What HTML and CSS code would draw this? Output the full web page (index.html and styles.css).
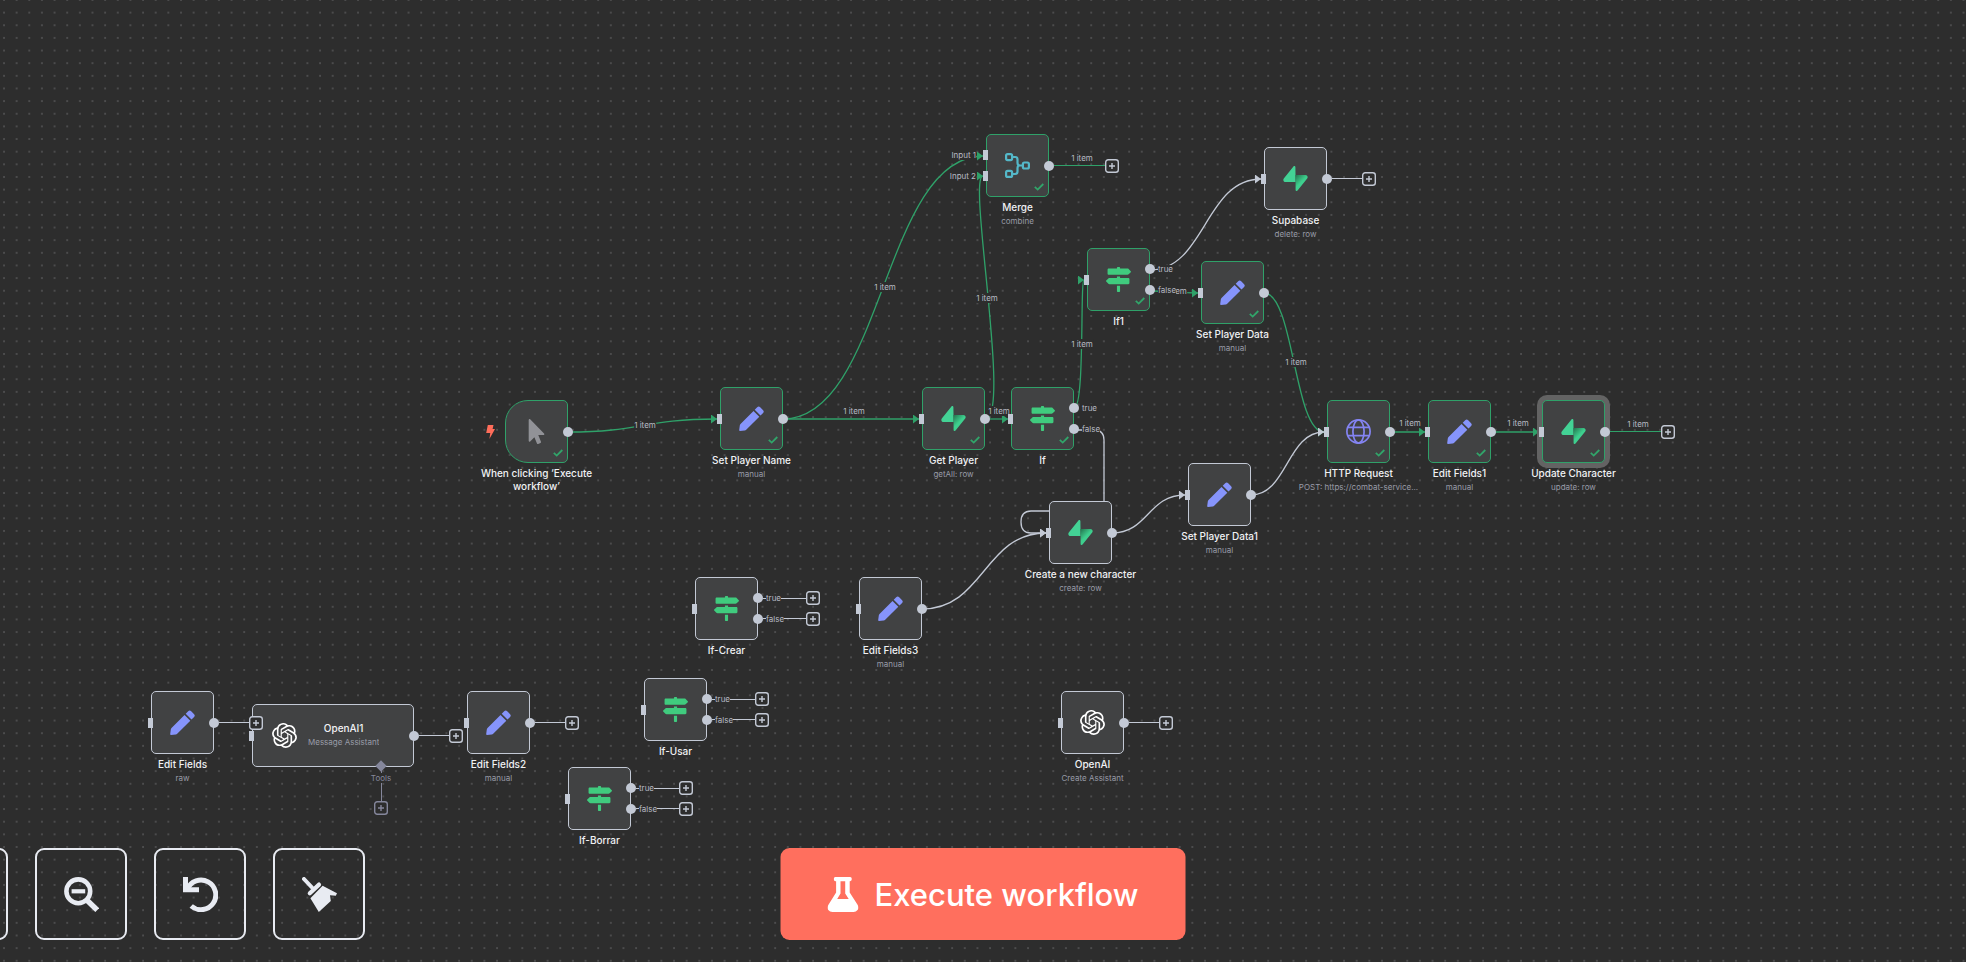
FILE: index.html
```html
<!DOCTYPE html>
<html lang="en">
<head>
<meta charset="utf-8">
<meta name="viewport" content="width=device-width, initial-scale=1">
<title>Workflow editor</title>
<link rel="stylesheet" href="styles.css">
</head>
<body>
<svg class="sprite" aria-hidden="true">
  <defs>
    <linearGradient id="bolt-shade" x1="12" y1="9" x2="18" y2="15" gradientUnits="userSpaceOnUse">
      <stop offset="0" stop-color="#24754f"/><stop offset="1" stop-color="#3ecf8e"/>
    </linearGradient>
    <symbol id="i-pencil" viewBox="0 0 25 25">
      <path fill="#8694fb" d="M.2 24 .8 19.400q.1-.8.700-1.400L14.500 5l5.800 5.800L7.200 23.800q-.6.600-1.400.7L1 25Q.1 25 .2 24zM15.700 3.800 18.200 1.300q1.500-1.500 3 0l2.900 2.900q1.300 1.400 0 2.800l-2.600 2.600z"/>
    </symbol>
    <symbol id="i-supabase" viewBox="0 0 24 24">
      <path fill="#43d295" d="M11.900 1.036c-.015-.986-1.260-1.410-1.874-.637L.764 12.050C-.330 13.427.650 15.455 2.409 15.455H12.100z"/>
      <path fill="url(#bolt-shade)" d="M12 8.545h9.591c1.758 0 2.738 2.028 1.645 3.403l-9.262 11.653c-.614.772-1.859.349-1.873-.636z"/>
    </symbol>
    <symbol id="i-signs" viewBox="0 0 512 512">
      <path fill="#40cb7e" d="M507.310 84.690L464 41.370c-6-6-14.140-9.370-22.630-9.370H288V16c0-8.840-7.160-16-16-16h-32c-8.840 0-16 7.160-16 16v16H56c-13.250 0-24 10.750-24 24v80c0 13.250 10.750 24 24 24h385.370c8.490 0 16.620-3.370 22.630-9.370l43.310-43.310c6.250-6.260 6.250-16.380 0-22.630zM224 496c0 8.840 7.160 16 16 16h32c8.840 0 16-7.160 16-16V384h-64v112zm232-272H288v-32h-64v32H70.630c-8.490 0-16.620 3.370-22.630 9.370L4.690 276.690c-6.250 6.250-6.250 16.380 0 22.630L48 342.630c6 6 14.140 9.370 22.630 9.370H456c13.250 0 24-10.750 24-24v-80c0-13.250-10.750-24-24-24z"/>
    </symbol>
    <symbol id="i-globe" viewBox="0 0 25 25">
      <g fill="none" stroke="#8484f2" stroke-width="1.700"><circle cx="12.500" cy="12.500" r="11.600"/><ellipse cx="12.500" cy="12.500" rx="5.600" ry="11.600"/><path d="M1.800 8.400h21.400M1.800 16.600h21.400"/></g>
    </symbol>
    <symbol id="i-merge" viewBox="0 0 25 25">
      <g fill="none" stroke="#54b8c9" stroke-width="2.200"><rect x="1.100" y="1.100" width="6" height="6" rx="1.500"/><rect x="1.100" y="17.900" width="6" height="6" rx="1.500"/><rect x="17.900" y="9.500" width="6" height="6" rx="1.500"/><path d="M7 4h3q2.500 0 2.500 2.500v3.500q0 2.500 2.500 2.500h3M7 21h3q2.500 0 2.500-2.500V15q0-2.500 2.500-2.500"/></g>
    </symbol>
    <symbol id="i-pointer" viewBox="0 0 320 512">
      <path fill="#919297" d="M302.189 329.126H196.105l55.831 135.993c3.889 9.428-.555 19.999-9.444 23.999l-49.165 21.427c-9.165 4-19.443-.571-23.332-9.714l-53.053-129.136-86.664 89.138C18.729 472.710 0 463.554 0 447.977V18.299C0 1.899 19.921-6.096 30.277 5.443l284.412 292.542c11.472 11.179 3.007 31.141-12.500 31.141z"/>
    </symbol>
    <symbol id="i-openai" viewBox="0 0 24 24">
      <path fill="#fff" d="M22.2819 9.8211a5.9847 5.9847 0 0 0-.5157-4.9108 6.0462 6.0462 0 0 0-6.5098-2.9A6.0651 6.0651 0 0 0 4.9807 4.1818a5.9847 5.9847 0 0 0-3.9977 2.9 6.0462 6.0462 0 0 0 .7427 7.0966 5.98 5.98 0 0 0 .511 4.9107 6.051 6.051 0 0 0 6.5146 2.9001A5.9847 5.9847 0 0 0 13.2599 24a6.0557 6.0557 0 0 0 5.7718-4.2058 5.9894 5.9894 0 0 0 3.9977-2.9001 6.0557 6.0557 0 0 0-.7475-7.0729zm-9.022 12.6081a4.4755 4.4755 0 0 1-2.8764-1.0408l.1419-.0804 4.7783-2.7582a.7948.7948 0 0 0 .3927-.6813v-6.7369l2.02 1.1686a.071.071 0 0 1 .038.052v5.5826a4.504 4.504 0 0 1-4.4945 4.4944zm-9.6607-4.1254a4.4708 4.4708 0 0 1-.5346-3.0137l.142.0852 4.783 2.7582a.7712.7712 0 0 0 .7806 0l5.8428-3.3685v2.3324a.0804.0804 0 0 1-.0332.0615L9.74 19.9502a4.4992 4.4992 0 0 1-6.1408-1.6464zM2.3408 7.8956a4.485 4.485 0 0 1 2.3655-1.9728V11.6a.7664.7664 0 0 0 .3879.6765l5.8144 3.3543-2.0201 1.1685a.0757.0757 0 0 1-.071 0l-4.8303-2.7865A4.504 4.504 0 0 1 2.3408 7.872zm16.5963 3.8558L13.1038 8.364 15.1192 7.2a.0757.0757 0 0 1 .071 0l4.8303 2.7913a4.4944 4.4944 0 0 1-.6765 8.1042v-5.6772a.79.79 0 0 0-.407-.667zm2.0107-3.0231l-.142-.0852-4.7735-2.7818a.7759.7759 0 0 0-.7854 0L9.409 9.2297V6.8974a.0662.0662 0 0 1 .0284-.0615l4.8303-2.7866a4.4992 4.4992 0 0 1 6.6802 4.66zM8.3065 12.863l-2.02-1.1638a.0804.0804 0 0 1-.038-.0567V6.0742a4.4992 4.4992 0 0 1 7.3757-3.4537l-.142.0805L8.704 5.459a.7948.7948 0 0 0-.3927.6813zm1.0976-2.3654l2.602-1.4998 2.6069 1.4998v2.9994l-2.5974 1.4997-2.6067-1.4997Z"/>
    </symbol>
    <symbol id="i-check" viewBox="0 0 10 8"><path fill="none" stroke="#31a56a" stroke-width="1.800" d="M.8 3.900 3.700 6.600 9.300 1"/></symbol>
    <symbol id="i-plus" viewBox="0 0 14 14"><g fill="none" stroke="currentColor" stroke-width="1.400"><rect x=".7" y=".7" width="12.600" height="12.600" rx="2.500"/><path d="M7 4v6M4 7h6"/></g></symbol>
    <symbol id="i-bolt" viewBox="0 0 9 14"><path fill="#ff6d5a" d="M1.800 0h5.700L6.600 4H9L3.400 14l.9-6H.2z"/></symbol>
    <symbol id="i-zoom-out" viewBox="0 0 35 35">
      <g fill="none" stroke="currentColor"><circle cx="14.300" cy="14.300" r="11.900" stroke-width="4.600"/><path stroke-width="4.200" d="M7.600 14.300h13.600"/><path stroke-width="5.400" d="m23 23.300 10.200 9.800"/></g>
    </symbol>
    <symbol id="i-zoom-in" viewBox="0 0 35 35">
      <g fill="none" stroke="currentColor"><circle cx="14.300" cy="14.300" r="11.900" stroke-width="4.600"/><path stroke-width="4.200" d="M7.600 14.300h13.600M14.300 7.600v13.600"/><path stroke-width="5.400" d="m23 23.300 10.200 9.800"/></g>
    </symbol>
    <symbol id="i-undo" viewBox="0 0 35 35">
      <g fill="none" stroke="currentColor" stroke-width="5"><path d="M2.500 0v12.700H16"/><path d="M4.300 12.300A14.800 14.800 0 1 1 8.200 29"/></g>
    </symbol>
    <symbol id="i-broom" viewBox="0 0 35 35">
      <path fill="none" stroke="currentColor" stroke-width="4" stroke-linecap="round" d="m2 2 8 8.500"/>
      <path fill="none" stroke="currentColor" stroke-width="4.200" stroke-linecap="round" d="M7.800 16.200 17 7.600"/>
      <path fill="currentColor" d="M20.600 8.700 35 16.300l-1.200 2.500-5.800-.6.800 5.800L16.800 35 8.400 21.200z"/>
    </symbol>
    <symbol id="i-flask" viewBox="0 0 31 35">
      <path fill="currentColor" fill-rule="evenodd" d="M8 0h14.600q1.700 0 1.700 2.100t-1.700 2.200h-.4v11.200l8 12.400q1.600 3.200-.2 5.200-1.400 1.900-4 1.900H5q-2.800 0-4.200-1.900-1.600-2.200 0-5.200l7.800-12.400V4.300H8q-1.700 0-1.700-2.200T8 0zm5 4.300v12.200L9.700 22h11.500l-3.500-5.500V4.300z"/>
    </symbol>
  </defs>
</svg>

<main class="canvas">
  <svg class="edges" width="100%" height="100%" aria-hidden="true">
    <defs>
      <pattern id="grid" x="3" y="-1" width="12.642" height="12.642" patternUnits="userSpaceOnUse">
        <circle cx="1" cy="1" r=".7" fill="#7c7d7e"/>
      </pattern>
      <marker id="arrow-ok" viewBox="0 0 6 9" refX="6" refY="4.500" markerWidth="6" markerHeight="9" markerUnits="userSpaceOnUse" orient="0"><path fill="#2fa169" d="M0 0l6 4.500L0 9z"/></marker>
      <marker id="arrow" viewBox="0 0 6 9" refX="6" refY="4.500" markerWidth="6" markerHeight="9" markerUnits="userSpaceOnUse" orient="0"><path fill="#c3c9d5" d="M0 0l6 4.500L0 9z"/></marker>
    </defs>
    <rect width="100%" height="100%" fill="url(#grid)"/>
    <g class="edge edge--ok">
      <path d="M568 432C642 432 642 419 717 419"/>
      <path d="M783 419H919"/>
      <path d="M783 419C883 419 883 156 983 156"/>
      <path d="M985 419C1012 419 967 176 983 176"/>
      <path d="M985 419H1008"/>
      <path d="M1074 408C1085 408 1080 280 1084 280"/>
      <path d="M1150 291C1173 291 1173 293 1198 293"/>
      <path d="M1264 293C1294 293 1294 432 1324 432"/>
      <path d="M1390 432H1425"/>
      <path d="M1491 432H1539"/>
    </g>
    <g class="edge">
      <path d="M1074 430H1094Q1104 430 1104 440V501Q1104 511 1094 511H1031Q1021 511 1021 522T1031 533H1046"/>
      <path d="M922 609C984 609 984 533 1046 533"/>
      <path d="M1112 533C1148 533 1148 495 1185 495"/>
      <path d="M1251 495C1287 495 1287 432 1324 432"/>
      <path d="M1150 270C1205 270 1205 179 1261 179"/>
    </g>
  </svg>

  <span class="edge-label at-trigger">1 item</span>
  <span class="edge-label at-name-merge">1 item</span>
  <span class="edge-label at-name-get">1 item</span>
  <span class="edge-label at-get-merge">1 item</span>
  <span class="edge-label at-get-if">1 item</span>
  <span class="edge-label at-if-if1">1 item</span>
  <span class="edge-label at-if1-data">1 item</span>
  <span class="edge-label at-data-http">1 item</span>
  <span class="edge-label at-http-edit">1 item</span>
  <span class="edge-label at-edit-update">1 item</span>

  <article class="node node--ok node--trigger n-trigger">
    <svg class="bolt"><use href="#i-bolt"/></svg>
    <svg class="icon"><use href="#i-pointer"/></svg>
    <svg class="check"><use href="#i-check"/></svg>
    <div class="out"><i class="dot"></i></div>
    <div class="caption"><h2 class="name">When clicking ‘Execute workflow’</h2></div>
  </article>

  <article class="node node--ok n-set-name">
    <i class="in"></i>
    <svg class="icon"><use href="#i-pencil"/></svg>
    <svg class="check"><use href="#i-check"/></svg>
    <div class="out"><i class="dot"></i></div>
    <div class="caption"><h2 class="name">Set Player Name</h2><p class="sub">manual</p></div>
  </article>

  <article class="node node--ok n-get-player">
    <i class="in"></i>
    <svg class="icon"><use href="#i-supabase"/></svg>
    <svg class="check"><use href="#i-check"/></svg>
    <div class="out"><i class="dot"></i></div>
    <div class="caption"><h2 class="name">Get Player</h2><p class="sub">getAll: row</p></div>
  </article>

  <article class="node node--ok n-if">
    <i class="in"></i>
    <svg class="icon"><use href="#i-signs"/></svg>
    <svg class="check"><use href="#i-check"/></svg>
    <div class="out out--first"><i class="dot"></i><span class="port">true</span></div>
    <div class="out out--second"><i class="dot"></i><span class="port">false</span></div>
    <div class="caption"><h2 class="name">If</h2></div>
  </article>

  <article class="node node--ok n-merge">
    <i class="in in--first"></i><span class="port-in port-in--first">Input 1</span>
    <i class="in in--second"></i><span class="port-in port-in--second">Input 2</span>
    <svg class="icon"><use href="#i-merge"/></svg>
    <svg class="check"><use href="#i-check"/></svg>
    <div class="out out--ok"><i class="dot"></i><i class="link link--long"></i><button class="plus" aria-label="Add node after Merge"><svg><use href="#i-plus"/></svg></button><span class="link-label">1 item</span></div>
    <div class="caption"><h2 class="name">Merge</h2><p class="sub">combine</p></div>
  </article>

  <article class="node node--ok n-if1">
    <i class="in"></i>
    <svg class="icon"><use href="#i-signs"/></svg>
    <svg class="check"><use href="#i-check"/></svg>
    <div class="out out--first"><i class="dot"></i><span class="port">true</span></div>
    <div class="out out--second"><i class="dot"></i><span class="port">false</span></div>
    <div class="caption"><h2 class="name">If1</h2></div>
  </article>

  <article class="node n-supabase">
    <i class="in"></i>
    <svg class="icon"><use href="#i-supabase"/></svg>
    <div class="out"><i class="dot"></i><i class="link"></i><button class="plus" aria-label="Add node after Supabase"><svg><use href="#i-plus"/></svg></button></div>
    <div class="caption"><h2 class="name">Supabase</h2><p class="sub">delete: row</p></div>
  </article>

  <article class="node node--ok n-set-data">
    <i class="in"></i>
    <svg class="icon"><use href="#i-pencil"/></svg>
    <svg class="check"><use href="#i-check"/></svg>
    <div class="out"><i class="dot"></i></div>
    <div class="caption"><h2 class="name">Set Player Data</h2><p class="sub">manual</p></div>
  </article>

  <article class="node node--ok n-http">
    <i class="in"></i>
    <svg class="icon"><use href="#i-globe"/></svg>
    <svg class="check"><use href="#i-check"/></svg>
    <div class="out"><i class="dot"></i></div>
    <div class="caption"><h2 class="name">HTTP Request</h2><p class="sub">POST: https://combat-service...</p></div>
  </article>

  <article class="node node--ok n-edit1">
    <i class="in"></i>
    <svg class="icon"><use href="#i-pencil"/></svg>
    <svg class="check"><use href="#i-check"/></svg>
    <div class="out"><i class="dot"></i></div>
    <div class="caption"><h2 class="name">Edit Fields1</h2><p class="sub">manual</p></div>
  </article>

  <article class="node node--ok node--selected n-update">
    <i class="in"></i>
    <svg class="icon"><use href="#i-supabase"/></svg>
    <svg class="check"><use href="#i-check"/></svg>
    <div class="out out--ok"><i class="dot"></i><i class="link link--long"></i><button class="plus" aria-label="Add node after Update Character"><svg><use href="#i-plus"/></svg></button><span class="link-label">1 item</span></div>
    <div class="caption"><h2 class="name">Update Character</h2><p class="sub">update: row</p></div>
  </article>

  <article class="node n-create">
    <i class="in"></i>
    <svg class="icon"><use href="#i-supabase"/></svg>
    <div class="out"><i class="dot"></i></div>
    <div class="caption"><h2 class="name">Create a new character</h2><p class="sub">create: row</p></div>
  </article>

  <article class="node n-set-data1">
    <i class="in"></i>
    <svg class="icon"><use href="#i-pencil"/></svg>
    <div class="out"><i class="dot"></i></div>
    <div class="caption"><h2 class="name">Set Player Data1</h2><p class="sub">manual</p></div>
  </article>

  <article class="node n-edit3">
    <i class="in"></i>
    <svg class="icon"><use href="#i-pencil"/></svg>
    <div class="out"><i class="dot"></i></div>
    <div class="caption"><h2 class="name">Edit Fields3</h2><p class="sub">manual</p></div>
  </article>

  <article class="node n-if-crear">
    <i class="in"></i>
    <svg class="icon"><use href="#i-signs"/></svg>
    <div class="out out--first"><i class="dot"></i><i class="link link--port"></i><button class="plus" aria-label="Add node after If-Crear true"><svg><use href="#i-plus"/></svg></button><span class="port">true</span></div>
    <div class="out out--second"><i class="dot"></i><i class="link link--port"></i><button class="plus" aria-label="Add node after If-Crear false"><svg><use href="#i-plus"/></svg></button><span class="port">false</span></div>
    <div class="caption"><h2 class="name">If-Crear</h2></div>
  </article>

  <article class="node n-if-usar">
    <i class="in"></i>
    <svg class="icon"><use href="#i-signs"/></svg>
    <div class="out out--first"><i class="dot"></i><i class="link link--port"></i><button class="plus" aria-label="Add node after If-Usar true"><svg><use href="#i-plus"/></svg></button><span class="port">true</span></div>
    <div class="out out--second"><i class="dot"></i><i class="link link--port"></i><button class="plus" aria-label="Add node after If-Usar false"><svg><use href="#i-plus"/></svg></button><span class="port">false</span></div>
    <div class="caption"><h2 class="name">If-Usar</h2></div>
  </article>

  <article class="node n-if-borrar">
    <i class="in"></i>
    <svg class="icon"><use href="#i-signs"/></svg>
    <div class="out out--first"><i class="dot"></i><i class="link link--port"></i><button class="plus" aria-label="Add node after If-Borrar true"><svg><use href="#i-plus"/></svg></button><span class="port">true</span></div>
    <div class="out out--second"><i class="dot"></i><i class="link link--port"></i><button class="plus" aria-label="Add node after If-Borrar false"><svg><use href="#i-plus"/></svg></button><span class="port">false</span></div>
    <div class="caption"><h2 class="name">If-Borrar</h2></div>
  </article>

  <article class="node n-openai">
    <i class="in"></i>
    <svg class="icon"><use href="#i-openai"/></svg>
    <div class="out"><i class="dot"></i><i class="link"></i><button class="plus" aria-label="Add node after OpenAI"><svg><use href="#i-plus"/></svg></button></div>
    <div class="caption"><h2 class="name">OpenAI</h2><p class="sub">Create Assistant</p></div>
  </article>

  <article class="node node--wide n-openai1">
    <i class="in"></i>
    <svg class="icon"><use href="#i-openai"/></svg>
    <div class="inline-caption"><h2 class="name">OpenAI1</h2><p class="sub">Message Assistant</p></div>
    <div class="out"><i class="dot"></i><i class="link"></i><button class="plus" aria-label="Add node after OpenAI1"><svg><use href="#i-plus"/></svg></button></div>
    <div class="tools"><i class="diamond"></i><i class="stem"></i><span class="tools-label">Tools</span><button class="plus" aria-label="Add tool"><svg><use href="#i-plus"/></svg></button></div>
  </article>

  <article class="node n-edit">
    <i class="in"></i>
    <svg class="icon"><use href="#i-pencil"/></svg>
    <div class="out"><i class="dot"></i><i class="link"></i><button class="plus" aria-label="Add node after Edit Fields"><svg><use href="#i-plus"/></svg></button></div>
    <div class="caption"><h2 class="name">Edit Fields</h2><p class="sub">raw</p></div>
  </article>

  <article class="node n-edit2">
    <i class="in"></i>
    <svg class="icon"><use href="#i-pencil"/></svg>
    <div class="out"><i class="dot"></i><i class="link"></i><button class="plus" aria-label="Add node after Edit Fields2"><svg><use href="#i-plus"/></svg></button></div>
    <div class="caption"><h2 class="name">Edit Fields2</h2><p class="sub">manual</p></div>
  </article>

  <div class="controls">
    <button class="control" aria-label="Zoom in"><svg><use href="#i-zoom-in"/></svg></button>
    <button class="control" aria-label="Zoom out"><svg><use href="#i-zoom-out"/></svg></button>
    <button class="control" aria-label="Reset zoom"><svg><use href="#i-undo"/></svg></button>
    <button class="control" aria-label="Tidy up workflow"><svg><use href="#i-broom"/></svg></button>
  </div>

  <div class="actions">
    <button class="execute"><svg><use href="#i-flask"/></svg>Execute workflow</button>
  </div>
</main>
</body>
</html>
```

FILE: styles.css
```css
:root {
  --bg: #2d2d2d;
  --node: #414243;
  --line: #c3c9d5;
  --ok: #2fa169;
  --muted: #999ca8;
  --control: #e8ebf2;
  --primary: #ff6f5e;
}

* {
  box-sizing: border-box;
}

body {
  margin: 0;
  background: var(--bg);
  font-family: Inter, "Noto Sans", sans-serif;
  color: #f0f1f4;
}

h2,
p {
  margin: 0;
}

button {
  font: inherit;
  cursor: pointer;
}

.sprite {
  position: absolute;
  width: 0;
  height: 0;
}

.canvas {
  position: relative;
  min-height: 100vh;
  overflow: hidden;
}

/* Edges */
.edges {
  position: absolute;
  inset: 0;
}

.edge path {
  fill: none;
  stroke: var(--line);
  stroke-width: 1.3;
  marker-end: url(#arrow);
}

.edge--ok path {
  stroke: var(--ok);
  marker-end: url(#arrow-ok);
}

.edge-label,
.link-label {
  position: absolute;
  transform: translate(-50%, -50%);
  background: var(--bg);
  font-size: 8px;
  line-height: 10px;
  white-space: nowrap;
  color: #b8bbc4;
}

.at-trigger { left: 645px; top: 425px; }
.at-name-merge { left: 885px; top: 287px; }
.at-name-get { left: 854px; top: 411px; }
.at-get-merge { left: 987px; top: 298px; }
.at-get-if { left: 999px; top: 411px; }
.at-if-if1 { left: 1082px; top: 344px; }
.at-if1-data { left: 1176px; top: 291px; }
.at-data-http { left: 1296px; top: 362px; }
.at-http-edit { left: 1410px; top: 423px; }
.at-edit-update { left: 1518px; top: 423px; }

/* Nodes */
.node {
  position: absolute;
  display: flex;
  align-items: center;
  justify-content: center;
  width: 63px;
  height: 63px;
  border: 1px solid var(--line);
  border-radius: 5px;
  background: var(--node);
}

.node--ok {
  border-color: var(--ok);
}

.node--trigger {
  border-radius: 23px 5px 5px 23px;
}

.node--selected {
  box-shadow: 0 0 0 5px #636363;
}

.node--wide {
  justify-content: flex-start;
  gap: 11px;
  width: 162px;
  padding-left: 19px;
}

.n-trigger { left: 505px; top: 400px; }
.n-set-name { left: 720px; top: 387px; }
.n-get-player { left: 922px; top: 387px; }
.n-if { left: 1011px; top: 387px; }
.n-merge { left: 986px; top: 134px; }
.n-if1 { left: 1087px; top: 248px; }
.n-supabase { left: 1264px; top: 147px; }
.n-set-data { left: 1201px; top: 261px; }
.n-http { left: 1327px; top: 400px; }
.n-edit1 { left: 1428px; top: 400px; }
.n-update { left: 1542px; top: 400px; }
.n-create { left: 1049px; top: 501px; }
.n-set-data1 { left: 1188px; top: 463px; }
.n-edit3 { left: 859px; top: 577px; }
.n-if-crear { left: 695px; top: 577px; }
.n-if-usar { left: 644px; top: 678px; }
.n-if-borrar { left: 568px; top: 767px; }
.n-openai { left: 1061px; top: 691px; }
.n-openai1 { left: 252px; top: 704px; }
.n-edit { left: 151px; top: 691px; }
.n-edit2 { left: 467px; top: 691px; }

.icon {
  flex: none;
  width: 25px;
  height: 25px;
}

.check {
  position: absolute;
  right: 4px;
  bottom: 5px;
  width: 10px;
  height: 8px;
}

.bolt {
  position: absolute;
  right: 100%;
  width: 9px;
  height: 14px;
  margin-right: 11px;
}

.caption {
  position: absolute;
  top: 100%;
  left: 50%;
  width: 126px;
  padding-top: 5px;
  transform: translateX(-50%);
  text-align: center;
}

.name {
  font-size: 10px;
  font-weight: 500;
  line-height: 13px;
}

.sub {
  overflow: hidden;
  font-size: 8px;
  line-height: 14px;
  white-space: nowrap;
  text-overflow: ellipsis;
  color: var(--muted);
}

.inline-caption {
  text-align: center;
}

/* Ports */
.in {
  position: absolute;
  top: 50%;
  left: -4px;
  width: 5px;
  height: 10px;
  transform: translateY(-50%);
  background: var(--line);
}

.in--first,
.out--first,
.port-in--first {
  top: 33%;
}

.in--second,
.out--second,
.port-in--second {
  top: 67%;
}

.port-in {
  position: absolute;
  right: 100%;
  margin-right: 11px;
  transform: translateY(-50%);
  background: var(--bg);
  font-size: 8px;
  line-height: 10px;
  white-space: nowrap;
  color: #b8bbc4;
}

.out {
  position: absolute;
  top: 50%;
  left: calc(100% - 4px);
  display: flex;
  align-items: center;
  transform: translateY(-50%);
  color: var(--line);
}

.out--first {
  top: 33%;
}

.out--second {
  top: 67%;
}

.dot {
  width: 10px;
  height: 10px;
  border-radius: 50%;
  background: var(--line);
}

.link {
  width: 30px;
  height: 1px;
  background: var(--line);
}

.link--long {
  width: 51px;
}

.link--port {
  width: 43px;
}

.out--ok .link {
  background: var(--ok);
}

.port {
  position: absolute;
  left: 13px;
  background: var(--bg);
  font-size: 8px;
  line-height: 8px;
  color: #b8bbc4;
}

.link-label {
  left: 38px;
  top: -1px;
}

.plus {
  display: flex;
  width: 14px;
  height: 14px;
  padding: 0;
  border: 0;
  border-radius: 3px;
  background: var(--bg);
  color: inherit;
}

.plus svg {
  flex: none;
  width: 14px;
  height: 14px;
}

/* Tools connector */
.tools {
  position: absolute;
  top: calc(100% - 5px);
  left: 80%;
  display: flex;
  flex-direction: column;
  align-items: center;
  transform: translateX(-50%);
  color: #85879c;
}

.diamond {
  width: 8px;
  height: 8px;
  margin: 1px;
  transform: rotate(45deg);
  background: currentColor;
}

.stem {
  width: 1px;
  height: 30px;
  background: currentColor;
}

.tools-label {
  position: absolute;
  top: 12px;
  background: var(--bg);
  font-size: 8px;
  line-height: 10px;
}

/* Canvas controls */
.controls {
  position: absolute;
  bottom: 22px;
  left: -84px;
  display: flex;
  gap: 27px;
}

.control {
  display: flex;
  align-items: center;
  justify-content: center;
  width: 92px;
  height: 92px;
  padding: 0;
  border: 2px solid var(--control);
  border-radius: 9px;
  background: none;
  color: var(--control);
}

.control svg {
  width: 35px;
  height: 35px;
}

.actions {
  position: absolute;
  bottom: 22px;
  left: 50%;
  transform: translateX(-50%);
}

.execute {
  display: flex;
  align-items: center;
  gap: 16px;
  height: 92px;
  padding: 0 47px;
  border: 0;
  border-radius: 9px;
  background: var(--primary);
  font-size: 31px;
  font-weight: 500;
  white-space: nowrap;
  color: #fff;
}

.execute svg {
  width: 31px;
  height: 35px;
}
```
